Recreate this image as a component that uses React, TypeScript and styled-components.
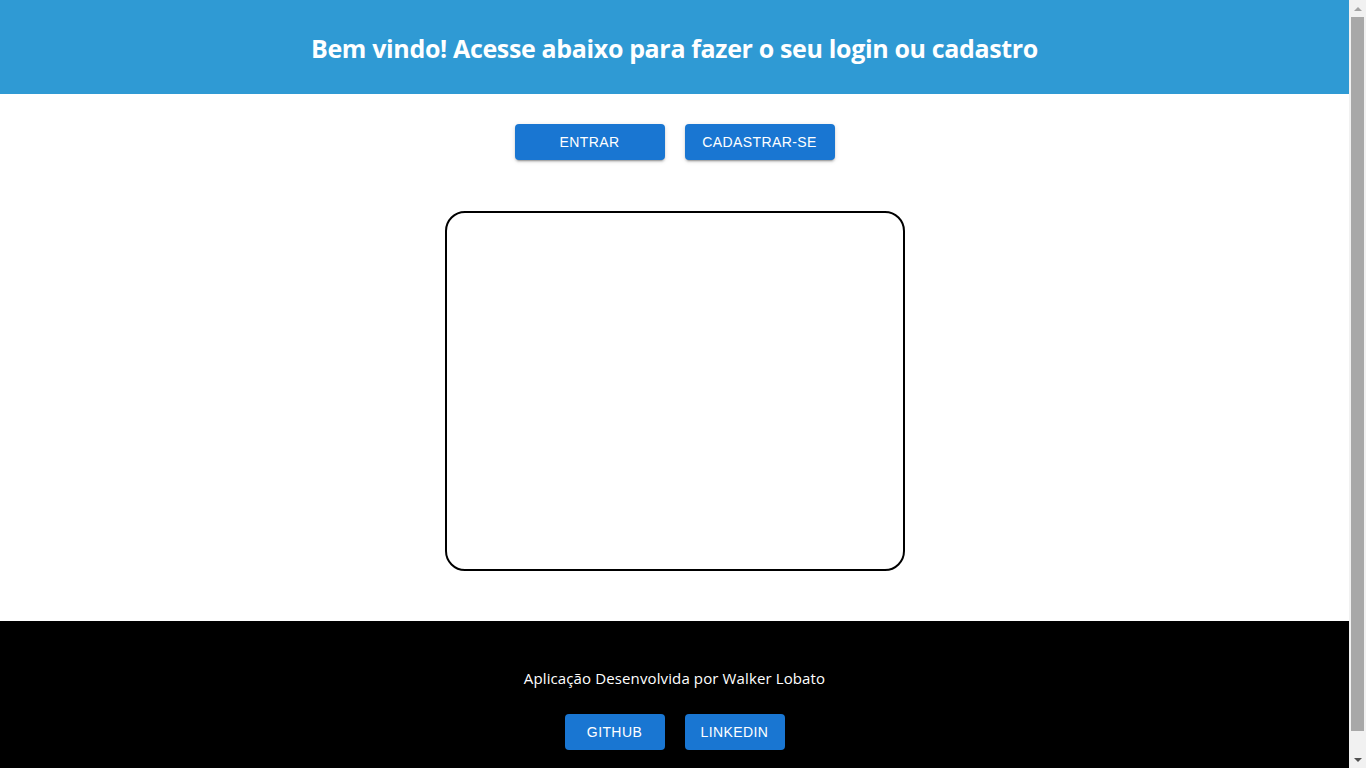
import React from 'react';
import styled, { createGlobalStyle } from 'styled-components';

const GlobalStyle = createGlobalStyle`
  html, body {
    margin: 0;
    padding: 0;
    background: #fff;
  }
  body {
    font-family: "Open Sans", "Noto Sans", sans-serif;
  }
  * {
    box-sizing: border-box;
  }
`;

// Styled components
const Page = styled.div`
  display: flex;
  flex-direction: column;
  min-height: 100vh;
  margin-right: 17px;
`;

const Header = styled.header`
  height: 94px;
  padding-top: 2px;
  background: #2f9ad4;
  display: flex;
  align-items: center;
  justify-content: center;
`;

const Title = styled.h1`
  margin: 0;
  color: #fff;
  font-size: 25px;
  font-weight: 700;
  letter-spacing: -0.35px;
`;

const Main = styled.main`
  display: flex;
  flex-direction: column;
  align-items: center;
  padding: 30px 0 50px;
`;

const ButtonRow = styled.div<{ $gap?: number }>`
  display: flex;
  justify-content: center;
  gap: ${(p) => p.$gap ?? 20}px;
`;

const Button = styled.button<{ $width: number; $flat?: boolean }>`
  width: ${(p) => p.$width}px;
  height: 36px;
  border: none;
  border-radius: 4px;
  background: #1976d2;
  color: #fff;
  font-family: "Liberation Sans", Arial, sans-serif;
  font-size: 14px;
  font-weight: 400;
  letter-spacing: 0.4px;
  text-transform: uppercase;
  cursor: pointer;
  box-shadow: ${(p) =>
    p.$flat
      ? 'none'
      : '0 3px 1px -2px rgba(0,0,0,0.2), 0 2px 2px 0 rgba(0,0,0,0.14), 0 1px 5px 0 rgba(0,0,0,0.12)'};
  &:hover {
    background: #1565c0;
  }
`;

const FormBox = styled.div`
  margin-top: 51px;
  width: 460px;
  height: 360px;
  border: 2px solid #000;
  border-radius: 20px;
`;

const Footer = styled.footer`
  background: #000;
  display: flex;
  flex-direction: column;
  align-items: center;
  padding: 46px 0 40px;
`;

const Credit = styled.p`
  margin: 0 0 25px;
  color: #fff;
  font-size: 15px;
  line-height: 22px;
  letter-spacing: 0.12px;
`;

// window scrollbar as seen in the screenshot
const ScrollBar = styled.aside`
  position: fixed;
  top: 0;
  right: 0;
  width: 17px;
  height: 100vh;
  background: #f1f1f1;
  display: flex;
  flex-direction: column;
  align-items: center;
  justify-content: space-between;
`;

const Arrow = styled.div<{ $down?: boolean }>`
  height: 17px;
  width: 17px;
  display: flex;
  align-items: center;
  justify-content: center;
  &::after {
    content: '';
    width: 0;
    height: 0;
    border-left: 4px solid transparent;
    border-right: 4px solid transparent;
    ${(p) =>
      p.$down
        ? 'border-top: 4px solid #505050;'
        : 'border-bottom: 4px solid #a3a3a3;'}
  }
`;

const Thumb = styled.div`
  width: 13px;
  height: calc(100vh - 54px);
  margin-bottom: auto;
  background: #a8a8a8;
`;

const App: React.FC = () => {
  return (
    <>
      <GlobalStyle />
      <Page>
        <Header>
          <Title>Bem vindo! Acesse abaixo para fazer o seu login ou cadastro</Title>
        </Header>
        <Main>
          <ButtonRow>
            <Button $width={150}>Entrar</Button>
            <Button $width={150}>Cadastrar-se</Button>
          </ButtonRow>
          <FormBox />
        </Main>
        <Footer>
          <Credit>Aplicação Desenvolvida por Walker Lobato</Credit>
          <ButtonRow>
            <Button $width={100} $flat>Github</Button>
            <Button $width={100} $flat>Linkedin</Button>
          </ButtonRow>
        </Footer>
      </Page>
      <ScrollBar>
        <Arrow />
        <Thumb />
        <Arrow $down />
      </ScrollBar>
    </>
  );
};

export default App;
